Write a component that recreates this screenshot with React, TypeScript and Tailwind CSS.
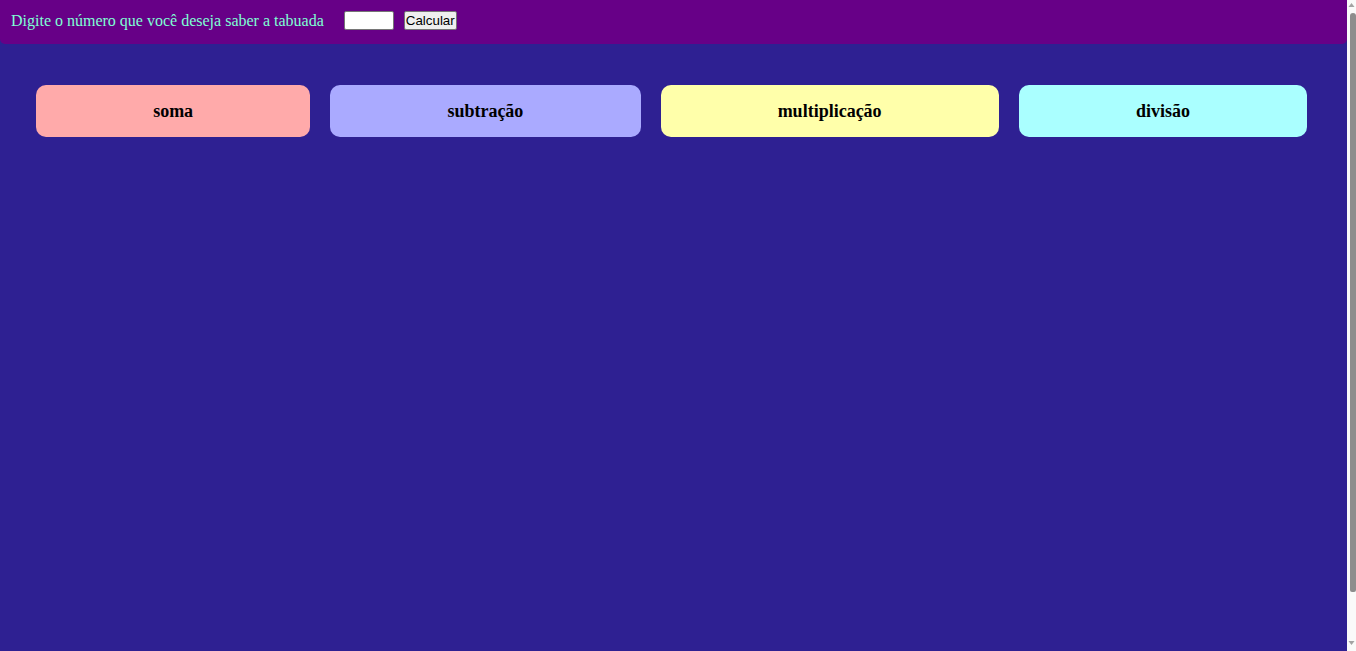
const cards = [
  { label: 'soma', color: 'bg-[#ffaaaa]' },
  { label: 'subtração', color: 'bg-[#aaaaff]' },
  { label: 'multiplicação', color: 'bg-[#ffffaa]' },
  { label: 'divisão', color: 'bg-[#aaffff]' },
];

const App = () => {
  return (
    <div className="flex h-screen overflow-hidden bg-[#2e2092]">
      <main className="flex-1 font-['Liberation_Serif',serif]">
        {/* cabeçalho com o formulário */}
        <header className="h-[44px] pt-[11px] pl-[11px] bg-[#670087] rounded-b-[5px]">
          <div className="flex items-center h-[19px]">
            <label htmlFor="numero" className="text-[16px] leading-[19px] text-[#7fffd4]">
              Digite o número que você deseja saber a tabuada
            </label>
            <input
              id="numero"
              type="text"
              className="ml-5 w-[50px] h-[19px] bg-white border border-[#767676] rounded-[2px] text-[13px]"
            />
            <button
              type="button"
              className="ml-[10px] h-[19px] w-[53px] bg-[#efefef] border border-[#767676] rounded-[2px] text-[13.33px] text-black font-['Liberation_Sans',sans-serif] leading-none"
            >
              Calcular
            </button>
          </div>
        </header>

        {/* operações */}
        <div className="flex gap-5 pl-[36px] pr-[40px] pt-[41px]">
          {cards.map((card) => (
            <div
              key={card.label}
              className={`flex-auto h-[52px] flex items-center justify-center rounded-[10px] ${card.color}`}
            >
              <span className="text-[18px] font-bold text-black">{card.label}</span>
            </div>
          ))}
        </div>
      </main>

      {/* barra de rolagem */}
      <aside className="w-[9px] flex flex-col bg-[#fafafa]">
        <svg width="9" height="13" viewBox="0 0 9 13" className="shrink-0">
          <path d="M4.5 3 L7.5 7 L1.5 7 Z" fill="#a3a3a3" />
        </svg>
        <div className="ml-[3px] w-[6px] h-[579px] bg-[#8d8d8d] rounded-t-[3px] rounded-b-[2px]" />
        <div className="flex-1" />
        <svg width="9" height="12" viewBox="0 0 9 12" className="shrink-0">
          <path d="M1.5 2 L7.5 2 L4.5 6 Z" fill="#a3a3a3" />
        </svg>
      </aside>
    </div>
  );
};

export default App;
